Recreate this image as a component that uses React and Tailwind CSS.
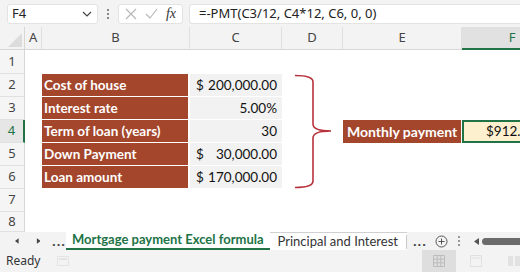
import React from "react";

const labels = ["Cost of house", "Interest rate", "Term of loan (years)", "Down Payment", "Loan amount"];
const values = [
  ["$", "200,000.00"],
  ["", "5.00%"],
  ["", "30"],
  ["$", "30,000.00"],
  ["$", "170,000.00"],
];

const ui = { fontFamily: '"Noto Sans", "Open Sans", sans-serif' };
const cell = { fontFamily: 'Lato, "Liberation Sans", sans-serif' };

function RowHead({ n, active }) {
  return (
    <div
      className={`flex items-center justify-center border-b border-r text-[13px] ${
        active ? "border-r-2 border-r-[#217346] bg-[#e6e6e6] text-[#217346]" : "border-r-[#d6d6d6] bg-[#f5f5f5] text-[#444]"
      } border-b-[#e1e1e1]`}
    >
      {n}
    </div>
  );
}

export default function App() {
  const colHeads = [
    ["A", "justify-start pl-[4px]"],
    ["B", "justify-center"],
    ["C", "justify-center"],
    ["D", "justify-center"],
    ["E", "justify-center"],
  ];

  return (
    <div className="flex h-[272px] w-[520px] flex-col overflow-hidden bg-white" style={ui}>
      {/* formula bar */}
      <div className="flex h-[27px] shrink-0 items-center bg-[#f3f3f3] pl-[7px]">
        <div className="flex h-[20px] w-[91px] items-center justify-between rounded-[3px] border border-[#e3e3e3] bg-white pl-[4px] pr-[5px] text-[13px] text-[#222]">
          <span>F4</span>
          <svg width="10" height="6" viewBox="0 0 10 6">
            <path d="M1 1l4 4 4-4" fill="none" stroke="#444" strokeWidth="1.2" />
          </svg>
        </div>
        <div className="flex w-[20px] flex-col items-center gap-[2px]">
          <span className="h-[2px] w-[2px] bg-[#888]" />
          <span className="h-[2px] w-[2px] bg-[#888]" />
          <span className="h-[2px] w-[2px] bg-[#888]" />
        </div>
        <div className="flex h-[20px] w-[65px] items-center justify-between rounded-[3px] border border-[#e3e3e3] bg-white px-[6px]">
          <svg width="12" height="12" viewBox="0 0 12 12">
            <path d="M1 1l10 10M11 1L1 11" stroke="#b5b5b5" strokeWidth="1.1" />
          </svg>
          <svg width="13" height="11" viewBox="0 0 13 11">
            <path d="M1 6l4 4 7-9" fill="none" stroke="#b5b5b5" strokeWidth="1.1" />
          </svg>
          <span className="text-[14px] italic text-[#333]" style={{ fontFamily: '"Liberation Serif", serif' }}>
            fx
          </span>
        </div>
        <div className="ml-[6px] flex h-[20px] flex-1 items-center rounded-l-[3px] border border-r-0 border-[#e3e3e3] bg-white pl-[9px] text-[13px] text-[#222]">
          =-PMT(C3/12, C4*12, C6, 0, 0)
        </div>
      </div>

      {/* sheet grid */}
      <div className="grid shrink-0 grid-cols-[25px_17px_148px_92px_61px_119px_100px] grid-rows-[23px_24px_23px_23px_23px_23px_23px_23px_20px]">
        {/* header row */}
        <div className="relative border-b border-r border-[#d6d6d6] bg-[#f3f3f3]">
          <svg className="absolute bottom-[2px] right-[2px]" width="14" height="14" viewBox="0 0 14 14">
            <path d="M14 0L14 14 0 14z" fill="#dcdcdc" />
          </svg>
        </div>
        {colHeads.map(([c, j]) => (
          <div key={c} className={`flex items-center ${j} border-b border-r border-b-[#d6d6d6] border-r-[#e0e0e0] bg-[#f3f3f3] text-[13px] text-[#444]`}>
            {c}
          </div>
        ))}
        <div className="flex items-center justify-center border-b-2 border-[#217346] bg-[#e1e1e1] text-[13px] text-[#217346]">F</div>

        {/* row 1 */}
        <RowHead n={1} />
        <div className="col-span-6" />

        {/* rows 2-6 */}
        {labels.map((l, i) => (
          <React.Fragment key={l}>
            <RowHead n={i + 2} active={i === 2} />
            <div />
            <div className="flex items-center whitespace-nowrap border-b border-r-2 border-white bg-[#a4462c] pl-[2px] text-[13.5px] font-bold text-white" style={cell}>
              {l}
            </div>
            <div className="flex items-center justify-between whitespace-nowrap border-b border-white bg-[#f2f2f2] pl-[6px] pr-[5px] text-[13.5px] text-[#111]" style={cell}>
              <span>{values[i][0]}</span>
              <span>{values[i][1]}</span>
            </div>
            {i === 0 && (
              <div className="row-span-5">
                <svg width="61" height="115" viewBox="0 0 61 115">
                  <path
                    d="M13 1.5Q31 1.5 31 8L31 50Q31 57 49 57Q31 57 31 64L31 107Q31 113.5 13 113.5"
                    fill="none"
                    stroke="#b8323c"
                    strokeWidth="1.6"
                  />
                </svg>
              </div>
            )}
            {i === 2 ? (
              <>
                <div className="flex items-center whitespace-nowrap border-r border-white bg-[#a4462c] pl-[4px] text-[14px] font-bold text-white" style={cell}>
                  Monthly payment
                </div>
                <div className="flex items-center overflow-hidden border-2 border-[#217346] bg-[#fdf0cf] pl-[22px] text-[13.5px] text-[#111]" style={cell}>
                  <span className="whitespace-nowrap">$912.52</span>
                </div>
              </>
            ) : (
              <div className="col-span-2" />
            )}
          </React.Fragment>
        ))}

        {/* rows 7-8 */}
        <RowHead n={7} />
        <div className="col-span-6" />
        <RowHead n={8} />
        <div className="col-span-6" />
      </div>

      {/* sheet tabs */}
      <div className="flex h-[18px] shrink-0 items-center whitespace-nowrap bg-[#f3f3f3] text-[13px]">
        <div className="flex w-[66px] shrink-0 items-center pl-[15px]">
          <svg width="5" height="6" viewBox="0 0 5 6">
            <path d="M4 0L0 3 4 6z" fill="#444" />
          </svg>
          <svg className="ml-[16px]" width="5" height="6" viewBox="0 0 5 6">
            <path d="M1 0L5 3 1 6z" fill="#444" />
          </svg>
          <span className="ml-[12px] font-bold leading-none tracking-[1px] text-[#444]">...</span>
        </div>
        <div className="flex h-full shrink-0 items-center border-b-2 border-[#217346] bg-white px-[6px] text-[13px] font-bold text-[#217346]" style={cell}>
          Mortgage payment Excel formula
        </div>
        <div className="flex h-full shrink-0 items-center border-t border-[#d0d0d0] bg-white pl-[8px] text-[13px] text-[#333]" style={cell}>
          <span className="pr-[8px]">Principal and Interest</span>
          <span className="h-[14px] w-px bg-[#c8c8c8]" />
        </div>
        <span className="ml-[6px] shrink-0 font-bold leading-none tracking-[1px] text-[#444]">...</span>
        <svg className="ml-[8px] shrink-0" width="13" height="13" viewBox="0 0 13 13">
          <circle cx="6.5" cy="6.5" r="5.5" fill="none" stroke="#555" strokeWidth="1" />
          <path d="M6.5 3.5v6M3.5 6.5h6" stroke="#555" strokeWidth="1" />
        </svg>
        <div className="ml-[10px] flex shrink-0 flex-col items-center gap-[2px]">
          <span className="h-[2px] w-[2px] bg-[#999]" />
          <span className="h-[2px] w-[2px] bg-[#999]" />
          <span className="h-[2px] w-[2px] bg-[#999]" />
        </div>
        <svg className="ml-[14px] shrink-0" width="5" height="7" viewBox="0 0 5 7">
          <path d="M5 0L0 3.5 5 7z" fill="#555" />
        </svg>
        <div className="ml-[3px] h-[7px] min-w-[20px] flex-1 rounded-l-full bg-[#6b6b6b]" />
      </div>

      {/* status bar */}
      <div className="flex flex-1 items-center bg-[#f3f3f3] text-[12px] text-[#333]">
        <span className="pl-[6px]">Ready</span>
        <svg className="ml-[17px]" width="12" height="10" viewBox="0 0 12 10">
          <rect x="0.5" y="0.5" width="11" height="9" fill="none" stroke="#e4e4e4" />
          <rect x="2" y="2" width="8" height="2" fill="#e4e4e4" />
        </svg>
        <div className="flex-1" />
        <div className="flex h-full w-[34px] items-center justify-center bg-[#dedede]">
          <svg width="12" height="12" viewBox="0 0 12 12">
            <path d="M0.5 0.5h11v11h-11zM4.2 0.5v11M7.8 0.5v11M0.5 4.2h11M0.5 7.8h11" fill="none" stroke="#bdbdbd" />
          </svg>
        </div>
        <div className="flex h-full w-[40px] items-center justify-center">
          <svg width="12" height="12" viewBox="0 0 12 12">
            <path d="M0.5 0.5h11v11h-11zM0.5 3h11" fill="none" stroke="#e0e0e0" />
          </svg>
        </div>
        <div className="flex h-full w-[24px] items-center justify-end">
          <svg width="12" height="12" viewBox="0 0 12 12">
            <rect x="0" y="1" width="5" height="10" fill="#e2e2e2" />
            <rect x="7" y="1" width="5" height="10" fill="#e2e2e2" />
          </svg>
        </div>
      </div>
    </div>
  );
}
